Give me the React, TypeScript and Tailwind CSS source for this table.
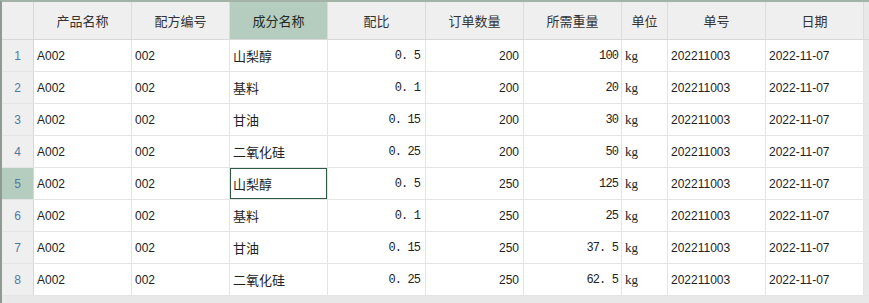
import React from "react";

const rows = [
  ["A002", "002", "山梨醇", "0. 5", "200", "100"],
  ["A002", "002", "基料", "0. 1", "200", "20"],
  ["A002", "002", "甘油", "0. 15", "200", "30"],
  ["A002", "002", "二氧化硅", "0. 25", "200", "50"],
  ["A002", "002", "山梨醇", "0. 5", "250", "125"],
  ["A002", "002", "基料", "0. 1", "250", "25"],
  ["A002", "002", "甘油", "0. 15", "250", "37. 5"],
  ["A002", "002", "二氧化硅", "0. 25", "250", "62. 5"],
];

const headers = ["产品名称", "配方编号", "成分名称", "配比", "订单数量", "所需重量", "单位", "单号", "日期"];

function HeaderCell({ label, selected, narrow }: { label: string; selected?: boolean; narrow?: boolean }) {
  return (
    <div
      className={`${narrow ? "w-[46px]" : "w-[98px]"} shrink-0 flex items-center justify-center border-r border-[#dcdcdc] text-[13px] font-['Noto_Sans_CJK_SC',sans-serif] ${selected ? "bg-[#b4cdbf] text-[#1f2a24]" : "bg-[#efefef] text-[#333]"}`}
    >
      {label}
    </div>
  );
}

export default function App() {
  return (
    <div className="w-[869px] h-[303px] bg-[#e8e8e8] border-l-2 border-t-2 border-l-[#8e9a92] border-t-[#a3b3a8] overflow-hidden text-[12px] text-[#222] font-['Liberation_Sans','Noto_Sans_CJK_SC',sans-serif]">
      <div className="flex h-[38px] border-b border-[#d8d8d8]">
        <div className="w-[32px] shrink-0 bg-[#efefef] border-r border-[#d8d8d8]" />
        {headers.map((h, i) => (
          <HeaderCell key={h} label={h} selected={i === 2} narrow={i === 6} />
        ))}
      </div>
      {rows.map((r, ri) => (
        <div key={ri} className="flex h-[32px] border-b border-[#e4e4e4] bg-white">
          <div
            className={`w-[32px] shrink-0 flex items-center justify-center border-r border-[#d8d8d8] text-[12px] text-[#4f79a6] ${ri === 4 ? "bg-[#b4cdbf]" : "bg-[#efefef]"}`}
          >
            {ri + 1}
          </div>
          <div className="w-[98px] shrink-0 flex items-center pl-[3px] border-r border-[#e4e4e4]">{r[0]}</div>
          <div className="w-[98px] shrink-0 flex items-center pl-[3px] border-r border-[#e4e4e4]">{r[1]}</div>
          <div className="w-[98px] shrink-0 flex items-center border-r border-[#e4e4e4]">
            <div
              className={`flex items-center h-[31px] w-[97px] pl-[2px] text-[13px] font-['Noto_Sans_CJK_SC',sans-serif] ${ri === 4 ? "border border-[#2f5a45]" : "border border-transparent"}`}
            >
              {r[2]}
            </div>
          </div>
          <div className="w-[98px] shrink-0 flex items-center justify-end pr-[5px] border-r border-[#e4e4e4] text-[12px] tracking-[-0.9px] font-['Liberation_Mono',monospace]">{r[3]}</div>
          <div className="w-[98px] shrink-0 flex items-center justify-end pr-[4px] border-r border-[#e4e4e4]">{r[4]}</div>
          <div className="w-[98px] shrink-0 flex items-center justify-end pr-[3px] border-r border-[#e4e4e4] text-[12px] tracking-[-0.9px] font-['Liberation_Mono',monospace]">{r[5]}</div>
          <div className="w-[46px] shrink-0 flex items-center pl-[3px] border-r border-[#e4e4e4] text-[13px] font-['Liberation_Serif',serif]">kg</div>
          <div className="w-[98px] shrink-0 flex items-center pl-[3px] border-r border-[#e4e4e4]">202211003</div>
          <div className="w-[98px] shrink-0 flex items-center pl-[3px] border-r border-[#e4e4e4]">2022-11-07</div>
          <div className="flex-1 bg-[#e8e8e8]" />
        </div>
      ))}
    </div>
  );
}
